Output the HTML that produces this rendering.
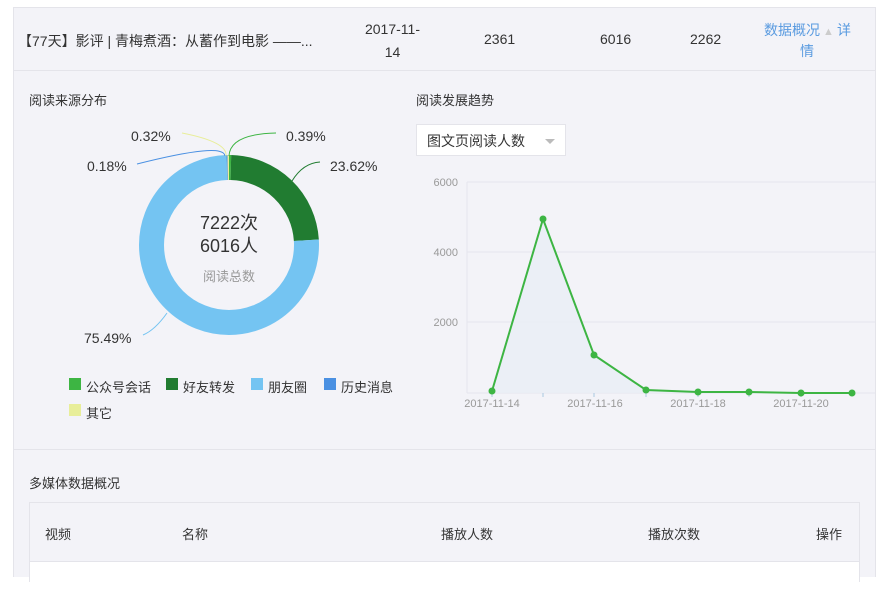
<!DOCTYPE html>
<html><head><meta charset="utf-8"><style>
*{margin:0;padding:0;box-sizing:border-box}
body{width:888px;height:566px;background:#fff;font-family:"Liberation Sans","Noto Sans CJK SC",sans-serif;color:#333;position:relative;overflow:hidden}
.abs{position:absolute}
.panel{position:absolute;left:13px;top:7px;width:863px;height:570px;background:#f3f3f8;border-left:1px solid #e4e4ea;border-right:1px solid #e4e4ea;border-top:1px solid #e4e4ea}
.t{position:absolute;font-size:13px;white-space:nowrap}
</style></head><body>
<div class="panel"></div>
<div class="abs" style="left:14px;top:70px;width:861px;height:1px;background:#e4e4ea"></div>
<div class="abs" style="left:14px;top:449px;width:861px;height:1px;background:#e4e4ea"></div>
<div class="t" style="left:18px;top:31px;font-size:14px">【77天】影评 | 青梅煮酒：从蓄作到电影 ——...</div>
<div class="t" style="left:360px;top:18px;font-size:14px;text-align:center;width:65px;line-height:23px">2017-11-<br>14</div>
<div class="t" style="left:484px;top:31px;font-size:14px">2361</div>
<div class="t" style="left:600px;top:31px;font-size:14px">6016</div>
<div class="t" style="left:690px;top:31px;font-size:14px">2262</div>
<div class="t" style="left:764px;top:19px;font-size:14px;color:#5a9be0;line-height:22px">数据概况<span style="color:#ccc;font-size:11px"> ▲ </span>详</div>
<div class="t" style="left:800px;top:41px;font-size:14px;color:#5a9be0">情</div>

<div class="t" style="left:29px;top:90px">阅读来源分布</div>
<div class="t" style="left:416px;top:90px">阅读发展趋势</div>

<svg class="abs" style="left:0;top:0" width="888" height="566">
<g transform="translate(229,245) rotate(-90)" fill="none" stroke-width="25">
<circle r="77.5" stroke="#3db543" stroke-dasharray="1.9 485" stroke-dashoffset="0"/>
<circle r="77.5" stroke="#217c31" stroke-dasharray="115 372" stroke-dashoffset="-1.9"/>
<circle r="77.5" stroke="#74c4f2" stroke-dasharray="367.6 120" stroke-dashoffset="-116.9"/>
<circle r="77.5" stroke="#4a90e2" stroke-dasharray="0.9 486" stroke-dashoffset="-484.5"/>
<circle r="77.5" stroke="#e8ee9a" stroke-dasharray="1.6 486" stroke-dashoffset="-485.4"/>
</g>
<path d="M229 156 Q230 134 276 133" stroke="#3db543" fill="none" stroke-width="1"/>
<path d="M226 156 Q228 142 182 133" stroke="#e8ee9a" fill="none" stroke-width="1"/>
<path d="M225 156 Q224 142 137 164" stroke="#4a90e2" fill="none" stroke-width="1"/>
<path d="M292 181 Q303 163 320 162" stroke="#217c31" fill="none" stroke-width="1"/>
<path d="M167 313 Q155 330 143 335" stroke="#74c4f2" fill="none" stroke-width="1"/>
<g stroke="#e6e6ee" stroke-width="1">
<line x1="467" y1="182" x2="875" y2="182"/><line x1="467" y1="252" x2="875" y2="252"/>
<line x1="467" y1="322" x2="875" y2="322"/><line x1="467" y1="393" x2="875" y2="393"/>
<line x1="467" y1="182" x2="467" y2="393"/>
</g>
<g stroke="#a8c8e0"><line x1="492" y1="393" x2="492" y2="397"/><line x1="543" y1="393" x2="543" y2="397"/><line x1="594" y1="393" x2="594" y2="397"/><line x1="646" y1="393" x2="646" y2="397"/><line x1="698" y1="393" x2="698" y2="397"/><line x1="749" y1="393" x2="749" y2="397"/><line x1="801" y1="393" x2="801" y2="397"/></g>
<path d="M492 391 L543 219 L594 355 L646 390 L698 392 L749 392 L801 393 L852 393 L852 393 L492 393Z" fill="#e8eef5" opacity="0.8"/>
<polyline points="492,391 543,219 594,355 646,390 698,392 749,392 801,393 852,393" fill="none" stroke="#3db543" stroke-width="2"/>
<g fill="#3db543"><circle cx="492" cy="391" r="3.5"/><circle cx="543" cy="219" r="3.5"/><circle cx="594" cy="355" r="3.5"/><circle cx="646" cy="390" r="3.5"/><circle cx="698" cy="392" r="3.5"/><circle cx="749" cy="392" r="3.5"/><circle cx="801" cy="393" r="3.5"/><circle cx="852" cy="393" r="3.5"/></g>
<g font-size="11" fill="#999" font-family="Liberation Sans,sans-serif" text-anchor="end">
<text x="458" y="186">6000</text><text x="458" y="256">4000</text><text x="458" y="326">2000</text></g>
<g font-size="11" fill="#999" font-family="Liberation Sans,sans-serif" text-anchor="middle">
<text x="492" y="407">2017-11-14</text><text x="595" y="407">2017-11-16</text><text x="698" y="407">2017-11-18</text><text x="801" y="407">2017-11-20</text></g>
</svg>
<div class="t" style="left:170px;top:212px;font-size:18px;width:118px;text-align:center;line-height:23px">7222次<br>6016人</div>
<div class="t" style="left:170px;top:266px;width:118px;text-align:center;color:#999">阅读总数</div>
<div class="t" style="left:131px;top:128px;font-size:14px">0.32%</div>
<div class="t" style="left:286px;top:128px;font-size:14px">0.39%</div>
<div class="t" style="left:87px;top:158px;font-size:14px">0.18%</div>
<div class="t" style="left:330px;top:158px;font-size:14px">23.62%</div>
<div class="t" style="left:84px;top:330px;font-size:14px">75.49%</div>

<div class="abs" style="left:69px;top:378px;width:12px;height:12px;background:#3db543"></div><div class="t" style="left:86px;top:377px">公众号会话</div>
<div class="abs" style="left:166px;top:378px;width:12px;height:12px;background:#217c31"></div><div class="t" style="left:183px;top:377px">好友转发</div>
<div class="abs" style="left:251px;top:378px;width:12px;height:12px;background:#74c4f2"></div><div class="t" style="left:268px;top:377px">朋友圈</div>
<div class="abs" style="left:324px;top:378px;width:12px;height:12px;background:#4a90e2"></div><div class="t" style="left:341px;top:377px">历史消息</div>
<div class="abs" style="left:69px;top:404px;width:12px;height:12px;background:#e8ee9a"></div><div class="t" style="left:86px;top:403px">其它</div>

<div class="abs" style="left:416px;top:124px;width:150px;height:32px;background:#fff;border:1px solid #e4e4ea"></div>
<div class="t" style="left:427px;top:131px;font-size:14px">图文页阅读人数</div>
<div class="abs" style="left:545px;top:139px;width:0;height:0;border-left:5px solid transparent;border-right:5px solid transparent;border-top:5px solid #bbb"></div>

<div class="t" style="left:29px;top:473px">多媒体数据概况</div>
<div class="abs" style="left:29px;top:502px;width:831px;height:80px;border:1px solid #e4e4ea;background:#f3f3f8"></div>
<div class="abs" style="left:30px;top:561px;width:829px;height:30px;background:#fff;border-top:1px solid #e4e4ea"></div>
<div class="t" style="left:45px;top:524px">视频</div>
<div class="t" style="left:182px;top:524px">名称</div>
<div class="t" style="left:441px;top:524px">播放人数</div>
<div class="t" style="left:648px;top:524px">播放次数</div>
<div class="t" style="left:816px;top:524px">操作</div>
</body></html>
